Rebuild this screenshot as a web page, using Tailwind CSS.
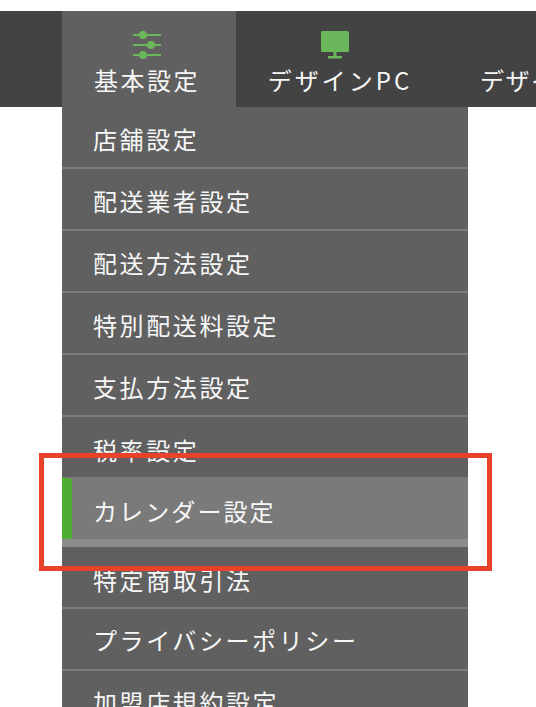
<!DOCTYPE html>
<html lang="ja">

<head>
    <meta charset="UTF-8">
    <meta name="viewport" content="width=device-width, initial-scale=1.0">
    <title>基本設定</title>
    <script src="https://cdn.jsdelivr.net/npm/@tailwindcss/browser@4"></script>
</head>

<body class="relative h-[707px] w-[536px] overflow-hidden bg-white font-['Noto_Sans_CJK_JP','Noto_Sans',sans-serif] text-[#f7f7f7]">

    <!-- Header -->
    <nav class="mt-[11px] flex h-[96px] bg-[#434343] pl-[62px]">
        <a class="flex w-[174px] shrink-0 flex-col items-center bg-[#606060] pr-[4px] pt-[20px]">
            <svg class="h-[28px] w-[28px]" viewBox="0 0 28 28" fill="#6bb85c">
                <rect x="0" y="3" width="28" height="2" />
                <circle cx="10" cy="4" r="4" />
                <rect x="0" y="13" width="28" height="2" />
                <circle cx="18" cy="14" r="4" />
                <rect x="0" y="23" width="28" height="2" />
                <circle cx="10" cy="24" r="4" />
            </svg>
            <span class="mt-[3px] text-[24px] leading-[36px] tracking-[2.5px]">基本設定</span>
        </a>
        <a class="flex w-[208px] shrink-0 flex-col items-center pt-[20px]">
            <svg class="mr-[10px] h-[28px] w-[28px]" viewBox="0 0 28 28" fill="#6bb85c">
                <rect x="0" y="0" width="28" height="21" rx="1.5" />
                <rect x="12.5" y="21" width="3" height="4" />
                <rect x="7" y="25" width="14" height="2.5" />
            </svg>
            <span class="mt-[3px] whitespace-nowrap text-[24px] leading-[36px] tracking-[3px]">デザインPC</span>
        </a>
        <a class="flex flex-1 flex-col overflow-hidden pl-[36px] pt-[51px]">
            <span class="whitespace-nowrap text-[24px] leading-[36px] tracking-[1.5px]">デザインスマホ</span>
        </a>
    </nav>

    <!-- Dropdown -->
    <ul class="ml-[62px] w-[406px] bg-[#606060] text-[24px] tracking-[2.6px]">
        <li class="flex h-[62px] items-center border-b-2 border-[#7c7c7c] pl-[31px] pt-[4px]">店舗設定</li>
        <li class="flex h-[62px] items-center border-b-2 border-[#7c7c7c] pl-[31px] pt-[4px]">配送業者設定</li>
        <li class="flex h-[62px] items-center border-b-2 border-[#7c7c7c] pl-[31px] pt-[4px]">配送方法設定</li>
        <li class="flex h-[62px] items-center border-b-2 border-[#7c7c7c] pl-[31px] pt-[4px]">特別配送料設定</li>
        <li class="flex h-[62px] items-center border-b-2 border-[#7c7c7c] pl-[31px] pt-[4px]">支払方法設定</li>
        <li class="flex h-[60px] items-center pl-[31px] pt-[6px]">税率設定</li>
        <li class="flex h-[70px] flex-col border-b-[8px] border-[#8c8c8c] bg-[#7a7a7a]">
            <div class="flex h-[62px] items-center border-l-[10px] border-t-2 border-l-[#4fae32] border-t-[#7a7a7a] pl-[21px] pt-[3px] tracking-[2.1px]">カレンダー設定</div>
        </li>
        <li class="flex h-[62px] items-center border-b-2 border-[#7c7c7c] pl-[31px] pt-[6px]">特定商取引法</li>
        <li class="flex h-[62px] items-center border-b-2 border-[#7c7c7c] pl-[31px] pt-[2px]">プライバシーポリシー</li>
        <li class="flex h-[62px] items-center border-b-2 border-[#7c7c7c] pl-[31px] pt-[2px]">加盟店規約設定</li>
    </ul>

    <!-- Highlight annotation -->
    <div class="absolute left-[39px] top-[453px] h-[118px] w-[453px] border-[5px] border-[#e8432a]"></div>

</body>
</html>
